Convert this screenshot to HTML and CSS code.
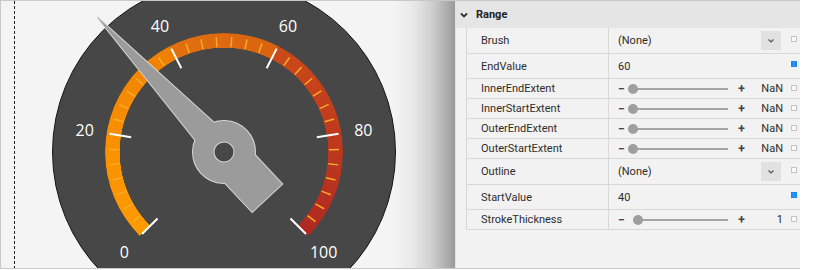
FILE: index.html
```html
<!DOCTYPE html>
<html lang="en">
  <head>
    <meta charset="UTF-8" />
    <meta name="viewport" content="width=device-width, initial-scale=1.0" />
    <title>Radial Gauge – Range</title>
    <link rel="stylesheet" href="styles.css">
  </head>
  <body>
    <div class="stage">

      <!-- Design surface with the gauge -->
      <section class="surface">
        <div class="guide"></div>

        <div class="dial">
          <div class="range-band"></div>

          <svg class="dial-overlay" viewBox="-171 -171 342 342">
            <defs>
              <g id="needle-shape">
                <polygon points="0,-185 -15,0 15,0" />
                <circle r="31" />
                <rect x="-20.5" y="0" width="41" height="63" />
              </g>
            </defs>

            <!-- minor ticks: 6 between each major -->
            <g class="minor-ticks">
              <line y1="-105" y2="-115" transform="rotate(-127.29)" />
              <line y1="-105" y2="-115" transform="rotate(-119.57)" />
              <line y1="-105" y2="-115" transform="rotate(-111.86)" />
              <line y1="-105" y2="-115" transform="rotate(-104.14)" />
              <line y1="-105" y2="-115" transform="rotate(-96.43)" />
              <line y1="-105" y2="-115" transform="rotate(-88.71)" />
              <line y1="-105" y2="-115" transform="rotate(-73.29)" />
              <line y1="-105" y2="-115" transform="rotate(-65.57)" />
              <line y1="-105" y2="-115" transform="rotate(-57.86)" />
              <line y1="-105" y2="-115" transform="rotate(-50.14)" />
              <line y1="-105" y2="-115" transform="rotate(-42.43)" />
              <line y1="-105" y2="-115" transform="rotate(-34.71)" />
              <line y1="-105" y2="-115" transform="rotate(-19.29)" />
              <line y1="-105" y2="-115" transform="rotate(-11.57)" />
              <line y1="-105" y2="-115" transform="rotate(-3.86)" />
              <line y1="-105" y2="-115" transform="rotate(3.86)" />
              <line y1="-105" y2="-115" transform="rotate(11.57)" />
              <line y1="-105" y2="-115" transform="rotate(19.29)" />
              <line y1="-105" y2="-115" transform="rotate(34.71)" />
              <line y1="-105" y2="-115" transform="rotate(42.43)" />
              <line y1="-105" y2="-115" transform="rotate(50.14)" />
              <line y1="-105" y2="-115" transform="rotate(57.86)" />
              <line y1="-105" y2="-115" transform="rotate(65.57)" />
              <line y1="-105" y2="-115" transform="rotate(73.29)" />
              <line y1="-105" y2="-115" transform="rotate(88.71)" />
              <line y1="-105" y2="-115" transform="rotate(96.43)" />
              <line y1="-105" y2="-115" transform="rotate(104.14)" />
              <line y1="-105" y2="-115" transform="rotate(111.86)" />
              <line y1="-105" y2="-115" transform="rotate(119.57)" />
              <line y1="-105" y2="-115" transform="rotate(127.29)" />
            </g>

            <g class="major-ticks">
              <line y1="-94" y2="-116" transform="rotate(-135)" />
              <line y1="-94" y2="-116" transform="rotate(-81)" />
              <line y1="-94" y2="-116" transform="rotate(-27)" />
              <line y1="-94" y2="-116" transform="rotate(27)" />
              <line y1="-94" y2="-116" transform="rotate(81)" />
              <line y1="-94" y2="-116" transform="rotate(135)" />
            </g>

            <g class="labels">
              <text x="-99.7" y="99.7">0</text>
              <text x="-139.3" y="-22.1">20</text>
              <text x="-64" y="-125.6">40</text>
              <text x="64" y="-125.6">60</text>
              <text x="139.3" y="-22.1">80</text>
              <text x="99.7" y="99.7">100</text>
            </g>

            <!-- needle at value 34 -->
            <g class="needle" transform="rotate(-43.2)">
              <use href="#needle-shape" class="needle-edge" />
              <use href="#needle-shape" class="needle-body" />
              <circle class="pivot" r="10" />
            </g>
          </svg>
        </div>
      </section>

      <!-- Property grid -->
      <aside class="props">
        <header class="props-header">
          <svg class="chevron" viewBox="0 0 8 6"><polyline points="1,1.5 4,4.5 7,1.5" /></svg>
          <span>Range</span>
        </header>

        <div class="grid">
          <div class="row combo">
            <span class="name">Brush</span>
            <span class="value">
              <span class="text">(None)</span>
              <span class="drop"><svg viewBox="0 0 6 4"><polyline points="0.5,0.5 3,3 5.5,0.5" /></svg></span>
              <span class="check"></span>
            </span>
          </div>

          <div class="row">
            <span class="name">EndValue</span>
            <span class="value">
              <span class="text">60</span>
              <span class="check on"></span>
            </span>
          </div>

          <div class="row slider-row">
            <span class="name">InnerEndExtent</span>
            <span class="value">
              <span class="step">−</span>
              <span class="slider"><span class="thumb"></span></span>
              <span class="step plus">+</span>
              <span class="num">NaN</span>
              <span class="check"></span>
            </span>
          </div>

          <div class="row slider-row">
            <span class="name">InnerStartExtent</span>
            <span class="value">
              <span class="step">−</span>
              <span class="slider"><span class="thumb"></span></span>
              <span class="step plus">+</span>
              <span class="num">NaN</span>
              <span class="check"></span>
            </span>
          </div>

          <div class="row slider-row">
            <span class="name">OuterEndExtent</span>
            <span class="value">
              <span class="step">−</span>
              <span class="slider"><span class="thumb"></span></span>
              <span class="step plus">+</span>
              <span class="num">NaN</span>
              <span class="check"></span>
            </span>
          </div>

          <div class="row slider-row">
            <span class="name">OuterStartExtent</span>
            <span class="value">
              <span class="step">−</span>
              <span class="slider"><span class="thumb"></span></span>
              <span class="step plus">+</span>
              <span class="num">NaN</span>
              <span class="check"></span>
            </span>
          </div>

          <div class="row combo">
            <span class="name">Outline</span>
            <span class="value">
              <span class="text">(None)</span>
              <span class="drop"><svg viewBox="0 0 6 4"><polyline points="0.5,0.5 3,3 5.5,0.5" /></svg></span>
              <span class="check"></span>
            </span>
          </div>

          <div class="row">
            <span class="name">StartValue</span>
            <span class="value">
              <span class="text">40</span>
              <span class="check on"></span>
            </span>
          </div>

          <div class="row slider-row">
            <span class="name">StrokeThickness</span>
            <span class="value">
              <span class="step">−</span>
              <span class="slider"><span class="thumb" style="left: 5px"></span></span>
              <span class="step plus">+</span>
              <span class="num">1</span>
              <span class="check"></span>
            </span>
          </div>
        </div>
      </aside>
    </div>
  </body>
</html>
```

FILE: styles.css
```css
* {
  box-sizing: border-box;
}

body {
  margin: 0;
  background: #fff;
  font-family: "Segoe UI", Roboto, sans-serif;
  font-size: 11px;
  color: #2d2d2d;
}

.stage {
  display: flex;
  width: 800px;
  height: 269px;
  border: 1px solid #c9c9c9;
  border-right: none;
  overflow: hidden;
}

/* ---- design surface ---- */

.surface {
  position: relative;
  flex: 1;
  padding-left: 13px;
  background: linear-gradient(90deg, #f4f4f4 0, #f4f4f4 392px, #e9e9e9 412px, #d0d0d0 430px, #b2b2b2 444px, #9a9a9a 100%);
}

.guide {
  width: 1px;
  height: 100%;
  background: repeating-linear-gradient(#1e1e1e 0 3px, transparent 3px 5px);
}

.dial {
  position: absolute;
  left: 51px;
  top: -21px;
  width: 344px;
  height: 344px;
  border: 1px solid #141414;
  border-radius: 50%;
  background: #474747;
}

.range-band {
  position: absolute;
  left: 52px;
  top: 52px;
  width: 238px;
  height: 238px;
  border-radius: 50%;
  background: conic-gradient(from -135deg,
    #ff9a00 0deg, #f98f00 54deg, #ef7f02 108deg,
    #e2700e 108deg, #da6210 162deg,
    #cb4a19 162deg, #bf3a1d 216deg, #b02922 270deg,
    transparent 270deg);
  -webkit-mask: radial-gradient(circle, transparent 104px, #000 104.5px);
  mask: radial-gradient(circle, transparent 104px, #000 104.5px);
}

.dial-overlay {
  position: absolute;
  left: 0;
  top: 0;
  width: 342px;
  height: 342px;
  overflow: visible;
}

.minor-ticks line {
  stroke: #f9ab2c;
  stroke-width: 1.5;
}

.major-ticks line {
  stroke: #fff;
  stroke-width: 2;
}

.labels text {
  fill: #fff;
  font-family: "Segoe UI", "Open Sans", sans-serif;
  font-size: 16px;
  text-anchor: middle;
  dominant-baseline: central;
}

.needle-edge {
  fill: #d6d6d6;
  stroke: #d6d6d6;
  stroke-width: 2;
}

.needle-body {
  fill: #9b9b9b;
}

.pivot {
  fill: #474747;
  stroke: #d6d6d6;
  stroke-width: 1;
}

/* ---- property grid ---- */

.props {
  width: 345px;
  border-left: 1px solid #e4e4e4;
  background: #f2f2f2;
}

.props-header {
  display: flex;
  align-items: center;
  gap: 8px;
  height: 27px;
  padding-left: 4px;
  background: #e5e5e5;
  font-weight: 700;
  color: #222;
}

.chevron {
  width: 8px;
  height: 6px;
}

.chevron polyline {
  fill: none;
  stroke: #333;
  stroke-width: 1.8;
}

.grid {
  margin-left: 10px;
  border-left: 1px solid #d8d8d8;
}

.row {
  display: flex;
  height: 25px;
  border-bottom: 1px solid #d8d8d8;
}

.row.combo {
  height: 26px;
}

.row.slider-row {
  height: 20px;
}

.name {
  display: flex;
  align-items: center;
  width: 142px;
  padding-left: 14px;
  border-right: 1px solid #d8d8d8;
}

.value {
  display: flex;
  align-items: center;
  flex: 1;
  padding-left: 9px;
}

.text {
  flex: 1;
}

.drop {
  display: flex;
  align-items: center;
  justify-content: center;
  width: 20px;
  height: 19px;
  margin-right: 3px;
  background: #e1e1e1;
}

.drop svg {
  width: 6px;
  height: 4px;
}

.drop polyline {
  fill: none;
  stroke: #555;
  stroke-width: 1.2;
}

.check {
  align-self: flex-start;
  width: 6px;
  height: 6px;
  margin: 7px 3px 0 7px;
  border: 1px solid #c3c3c3;
  background: #fafafa;
}

.row.combo .check {
  margin-top: 8px;
}

.row.slider-row .check {
  margin-top: 6px;
}

.check.on {
  border-color: #1a86e8;
  background: #1e90ff;
}

.step {
  width: 10px;
  font-weight: 700;
  font-size: 12px;
  color: #444;
}

.step.plus {
  width: 27px;
  text-align: center;
}

.slider {
  position: relative;
  width: 100px;
  height: 10px;
}

.slider::before {
  content: "";
  position: absolute;
  left: 5px;
  right: 0;
  top: 4px;
  height: 2px;
  background: #a5a5a5;
}

.thumb {
  position: absolute;
  left: 0;
  top: 0;
  width: 10px;
  height: 10px;
  border-radius: 50%;
  background: #9e9e9e;
}

.num {
  flex: 1;
  text-align: right;
  padding-right: 1px;
}
```
